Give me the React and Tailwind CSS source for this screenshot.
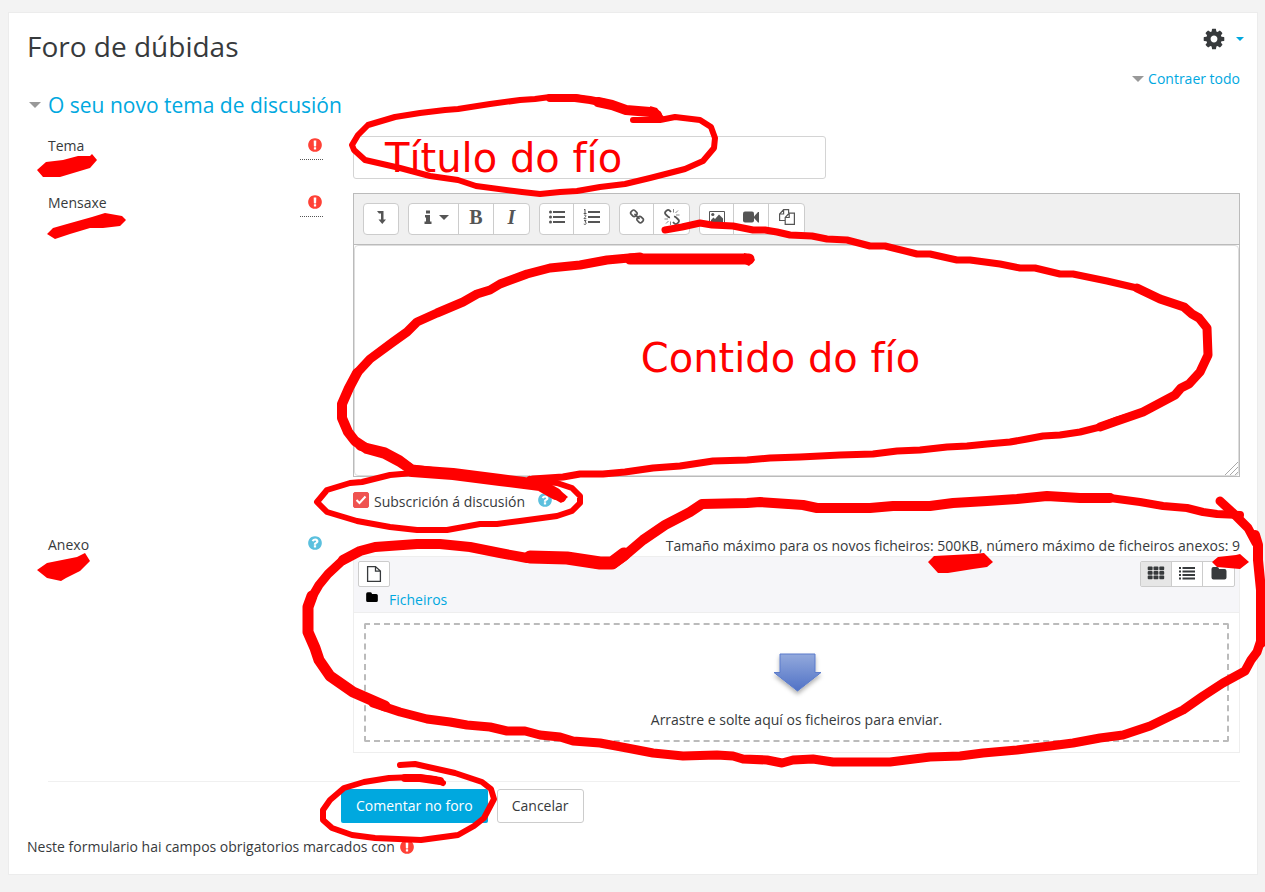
import React, { useState } from "react";

// ---------- icons (1792 grid) ----------
const PATHS = {
  cog: "M1152 896q0-106-75-181t-181-75-181 75-75 181 75 181 181 75 181-75 75-181zm512-109v222q0 12-8 23t-20 13l-185 28q-19 54-39 91 35 50 107 138 10 12 10 25t-9 23q-27 37-99 108t-94 71q-12 0-26-9l-138-108q-44 23-91 38-16 136-29 186-7 28-36 28h-222q-14 0-24.5-8.5t-11.5-21.5l-28-184q-49-16-90-37l-141 107q-10 9-25 9-14 0-25-11-126-114-165-168-7-10-7-23 0-12 8-23 15-21 51-66.5t54-70.5q-27-50-41-99l-183-27q-13-2-21-12.5t-8-23.5v-222q0-12 8-23t19-13l186-28q14-46 39-92-40-57-107-138-10-12-10-24 0-10 9-23 26-36 98.5-107.5t94.5-71.5q13 0 26 10l138 107q44-23 91-38 16-136 29-186 7-28 36-28h222q14 0 24.5 8.5t11.5 21.5l28 184q49 16 90 37l142-107q9-9 24-9 13 0 25 10 129 119 165 170 7 8 7 22 0 12-8 23-15 21-51 66.5t-54 70.5q26 50 41 98l183 28q13 2 21 12.5t8 23.5z",
  exclamation:
    "M896 128q209 0 385.5 103t279.5 279.5 103 385.5-103 385.5-279.5 279.5-385.5 103-385.5-103-279.5-279.5-103-385.5 103-385.5 279.5-279.5 385.5-103zm128 1247v-190q0-14-9-23.5t-22-9.5h-192q-13 0-23 10t-10 23v190q0 13 10 23t23 10h192q13 0 22-9.5t9-23.5zm-2-344l18-621q0-12-10-18-10-8-24-8h-220q-14 0-24 8-10 6-10 18l17 621q0 10 10 17.5t24 7.5h185q14 0 23.5-7.5t10.5-17.5z",
  question:
    "M1024 1376v-192q0-14-9-23t-23-9h-192q-14 0-23 9t-9 23v192q0 14 9 23t23 9h192q14 0 23-9t9-23zm256-672q0-88-55.5-163t-138.5-116-170-41q-243 0-371 213-15 24 8 42l132 100q7 6 19 6 16 0 25-12 53-68 86-92 34-24 86-24 48 0 85.5 26t37.5 59q0 38-20 61t-68 45q-63 28-115.5 86.5t-52.5 125.5v36q0 14 9 23t23 9h192q14 0 23-9t9-23q0-19 21.5-49.5t54.5-49.5q32-18 49-28.5t46-35 44.5-48 28-60.5 12.5-81zm384 192q0 209-103 385.5t-279.5 279.5-385.5 103-385.5-103-279.5-279.5-103-385.5 103-385.5 279.5-279.5 385.5-103 385.5 103 279.5 279.5 103 385.5z",
  link: "M1520 1216q0-40-28-68l-208-208q-28-28-68-28-42 0-72 32 3 3 19 18.5t21.5 21.5 15 19 13 25.5 3.5 27.5q0 40-28 68t-68 28q-15 0-27.5-3.5t-25.5-13-19-15-21.5-21.5-18.5-19q-33 31-33 73 0 40 28 68l206 207q27 27 68 27 40 0 68-26l147-146q28-28 28-67zm-703-705q0-40-28-68l-206-207q-28-28-68-28-39 0-68 27l-147 146q-28 28-28 67 0 40 28 68l208 208q27 27 68 27 42 0 72-31-3-3-19-18.5t-21.5-21.5-15-19-13-25.5-3.5-27.5q0-40 28-68t68-28q15 0 27.5 3.5t25.5 13 19 15 21.5 21.5 18.5 19q33-31 33-73zm895 705q0 120-85 203l-147 146q-83 83-203 83-121 0-204-85l-206-207q-83-83-83-203 0-123 88-209l-88-88q-86 88-208 88-120 0-204-84l-208-208q-84-84-84-204t85-203l147-146q83-83 203-83 121 0 204 85l206 207q83 83 83 203 0 123-88 209l88 88q86-88 208-88 120 0 204 84l208 208q84 84 84 204z",
};

function Glyph({ name, className }) {
  return (
    <svg viewBox="0 0 1792 1792" fill="currentColor" aria-hidden="true" className={className}>
      <path d={PATHS[name]} />
    </svg>
  );
}

function Caret({ className }) {
  return (
    <svg viewBox="0 0 12 6" fill="currentColor" aria-hidden="true" className={className}>
      <path d="M0 0h12L6 6z" />
    </svg>
  );
}

function Small({ children, className = "w-[18px] h-[18px]" }) {
  return (
    <svg viewBox="0 0 18 18" fill="currentColor" aria-hidden="true" className={className}>
      {children}
    </svg>
  );
}

const ExpandIcon = () => (
  <Small>
    <path d="M5 3h6.500v8.500H14L10.250 16 6.500 11.500H9V5.500H7z" />
  </Small>
);

const InfoIcon = () => (
  <Small>
    <path d="M7 2.500h4v3H7zM6 7h5v6.500h1.500V16h-7v-2.500H7v-4H6z" />
  </Small>
);

const BulletIcon = () => (
  <Small>
    <circle cx="2.500" cy="4" r="1.500" />
    <circle cx="2.500" cy="9" r="1.500" />
    <circle cx="2.500" cy="14" r="1.500" />
    <path d="M5 3h12v2H5zM5 8h12v2H5zM5 13h12v2H5z" />
  </Small>
);

const NumberIcon = () => (
  <Small>
    <path d="M5 3h12v2H5zM5 8h12v2H5zM5 13h12v2H5z" />
    <path
      d="M1 2l1-.8V5.500M.7 5.500H3.500M1 7.500c.5-.8 2.200-.6 2 .5C2.800 9 1 9.600 1 10.700h2.300M1 12.600h2.100l-1.100 1.500c1.600 0 1.600 2.300-.1 2.300L.8 16"
      fill="none"
      stroke="currentColor"
      strokeWidth="1"
    />
  </Small>
);

const UnlinkIcon = () => (
  <Small>
    <g fill="none" stroke="currentColor" strokeWidth="1.800">
      <path d="M8 4L6.700 2.600a2.200 2.200 0 0 0-3.100 0l-.8.8a2.200 2.200 0 0 0 0 3.100L5 8.700a2.200 2.200 0 0 0 2 .6" />
      <path d="M10 14l1.300 1.400a2.200 2.200 0 0 0 3.100 0l.8-.8a2.200 2.200 0 0 0 0-3.100L13 9.300a2.200 2.200 0 0 0-2-.6" />
    </g>
    <path
      d="M10.500 1v3.500M12.500 5l2.500-2.500M13 7h3.500M7.500 17v-3.500M5.500 13L3 15.500M5 11H1.500"
      fill="none"
      stroke="currentColor"
      strokeWidth="0.700"
    />
  </Small>
);

const ImageIcon = () => (
  <Small>
    <path d="M1.500 3.500h15v12h-15z" fill="none" stroke="currentColor" />
    <circle cx="4.800" cy="6.500" r="1.600" />
    <path d="M3 14v-2l2.500-2.500L7 11l4-4.500 4 4V14z" />
  </Small>
);

const VideoIcon = () => (
  <Small>
    <rect x="1" y="3.500" width="11" height="11" rx="2" />
    <path d="M12 8.500l4-4.500h1v10.500h-1l-4-4.500z" />
  </Small>
);

const FilesIcon = () => (
  <Small>
    <g fill="none" stroke="currentColor" strokeWidth="1.200">
      <path d="M7 12.500H1.600V6l4-4.400h5v3.500M5.600 1.600V6h-4" />
      <path d="M7.200 16.400V9.500l4-4.400h5.200v11.300zM11.200 5.100v4.400h-4" />
    </g>
  </Small>
);

const FileIcon = () => (
  <Small>
    <path
      d="M3 1.600h7.500L15.400 6v10.400H2.600V1.600zM10.500 1.600V6.200h4.900"
      fill="none"
      stroke="currentColor"
      strokeWidth="1.300"
    />
  </Small>
);

const GridIcon = () => (
  <Small>
    {[2.500, 7, 11.500].map((y) => (
      <g key={y}>
        <rect x="0.700" y={y} width="4.900" height="3.700" rx="0.900" />
        <rect x="6.500" y={y} width="4.900" height="3.700" rx="0.900" />
        <rect x="12.300" y={y} width="4.900" height="3.700" rx="0.900" />
      </g>
    ))}
  </Small>
);

const ListIcon = () => (
  <Small>
    <path d="M1 3h2v2H1zM1 6.500h2v2H1zM1 10h2v2H1zM1 13.500h2v2H1zM4.500 3H17v2H4.500zM4.500 6.500H17v2H4.500zM4.500 10H17v2H4.500zM4.500 13.500H17v2H4.500z" />
  </Small>
);

const FolderIcon = ({ className }) => (
  <Small className={className}>
    <path d="M1.500 5a2 2 0 0 1 2-2h3.500a2 2 0 0 1 2 2h5.500a2 2 0 0 1 2 2v6.500a2 2 0 0 1-2 2h-11a2 2 0 0 1-2-2z" />
  </Small>
);

// ---------- form pieces ----------
function Required() {
  return (
    <abbr
      title="Obrigatorio"
      className="flex h-6 w-[23px] justify-end border-b border-dotted border-[#555] pt-[1px]"
    >
      <Glyph name="exclamation" className="h-4 w-4 text-[#ff4136]" />
    </abbr>
  );
}

function Help({ label }) {
  return (
    <button type="button" aria-label={label} className="block">
      <Glyph name="question" className="h-4 w-4 text-[#5bc0de]" />
    </button>
  );
}

function Row({ htmlFor, label, icon, children, className }) {
  return (
    <div className={`grid grid-cols-[305px_1fr] pl-[21px] ${className}`}>
      <div className="flex items-start justify-between pr-[30px]">
        <label htmlFor={htmlFor} className="leading-5">
          {label}
        </label>
        {icon}
      </div>
      <div className="min-w-0">{children}</div>
    </div>
  );
}

const TOOLS = [
  [{ label: "Amosar máis botóns", width: "w-[34px]", icon: <ExpandIcon /> }],
  [
    {
      label: "Estilos de parágrafo",
      width: "w-[50px] gap-0.5",
      icon: (
        <>
          <InfoIcon />
          <Caret className="h-[5px] w-[10px]" />
        </>
      ),
    },
    {
      label: "Negra",
      width: "w-[35px]",
      icon: <b className="font-['Liberation_Serif',serif] text-xl leading-5">B</b>,
    },
    {
      label: "Cursiva",
      width: "w-[35px]",
      icon: <b className="font-['Liberation_Serif',serif] text-xl italic leading-5">I</b>,
    },
  ],
  [
    { label: "Lista sen ordenar", width: "w-[34px]", icon: <BulletIcon /> },
    { label: "Lista ordenada", width: "w-[35px]", icon: <NumberIcon /> },
  ],
  [
    { label: "Ligazón", width: "w-[34px]", icon: <Glyph name="link" className="h-4 w-4" /> },
    { label: "Retirar ligazón", width: "w-[35px]", icon: <UnlinkIcon /> },
  ],
  [
    { label: "Imaxe", width: "w-[34px]", icon: <ImageIcon /> },
    { label: "Multimedia", width: "w-[35px]", icon: <VideoIcon /> },
    { label: "Xestionar ficheiros", width: "w-[35px]", icon: <FilesIcon /> },
  ],
];

function EditorToolbar() {
  return (
    <div className="flex flex-wrap gap-[9px] border-b border-[#bbb] bg-[#f0f0f0] p-[9px]">
      {TOOLS.map((group, i) => (
        <div
          key={i}
          className="flex h-8 divide-x divide-[#ccc] rounded border border-[#ccc] bg-white text-[#555]"
        >
          {group.map((tool) => (
            <button
              key={tool.label}
              type="button"
              aria-label={tool.label}
              className={`flex items-center justify-center pb-1 ${tool.width}`}
            >
              {tool.icon}
            </button>
          ))}
        </div>
      ))}
    </div>
  );
}

function FileManager() {
  return (
    <div className="border border-[#eee] bg-white">
      <div className="border-b border-[#eee] bg-[#f6f6f9] px-1 pt-1">
        <div className="flex items-start justify-between">
          <button
            type="button"
            aria-label="Engadir"
            className="flex h-[26px] w-8 items-center justify-center rounded-xs border border-[#ccc] bg-white"
          >
            <FileIcon />
          </button>
          <div className="flex h-[26px] divide-x divide-[#ccc] rounded-xs border border-[#ccc] bg-white">
            <button type="button" aria-label="Iconas" className="flex w-[31px] justify-center bg-[#e6e6e6] pt-0.5">
              <GridIcon />
            </button>
            <button type="button" aria-label="Lista" className="flex w-[31px] justify-center pt-0.5">
              <ListIcon />
            </button>
            <button type="button" aria-label="Árbore" className="flex w-[31px] justify-center pt-0.5">
              <FolderIcon className="h-[18px] w-[18px]" />
            </button>
          </div>
        </div>
        <div className="flex h-[25px] items-start gap-[10px] pl-[7px] pt-[3px]">
          <FolderIcon className="h-[14px] w-[14px] text-black" />
          <a href="#ficheiros" className="leading-5 text-[#00a8df]">
            Ficheiros
          </a>
        </div>
      </div>

      <div className="p-[10px]">
        <div className="flex h-[119px] flex-col items-center rounded-xs border-2 border-dashed border-[#bbb] pt-[25px]">
          <svg viewBox="0 0 60 50" className="h-[50px] w-[60px]" aria-hidden="true">
            <defs>
              <linearGradient id="arrow" x1="0" y1="0" x2="0" y2="1">
                <stop offset="0" stopColor="#93a9dc" />
                <stop offset="1" stopColor="#5072c6" />
              </linearGradient>
              <filter id="arrow-shadow" x="-20%" y="-20%" width="140%" height="150%">
                <feDropShadow dx="0" dy="3" stdDeviation="2" floodColor="#000" floodOpacity="0.300" />
              </filter>
            </defs>
            <path
              d="M13 4h35v18.500h6L30.500 41 7 22.500h6z"
              fill="url(#arrow)"
              stroke="#5b7bcb"
              filter="url(#arrow-shadow)"
            />
          </svg>
          <p className="pt-[10px] leading-5">Arrastre e solte aquí os ficheiros para enviar.</p>
        </div>
      </div>
    </div>
  );
}

// ---------- red marker layer ----------
const STROKES = [
  // title
  [6, "M633 120L660 120 675 117 700 120 711 127 715 138 714 148 703 161 685 169 650 178 625 184 600 187 577 191 560 192 540 194 522 192 476 186 458 180 430 176 400 168 365 160 354 150 352 145 358 135 368 125 395 117 420 113 445 110 458 109 490 104 520 100 535 99 550 97 575 97 590 100"],
  [8, "M550 98L575 98 590 100 605 103"],
  [10, "M598 102L612 105 626 110 650 112 657 115"],
  // content
  [7, "M665 230L682 227 700 223 712 225 733 226 753 230 765 230 777 232 790 235 812 236 827 239 847 240 870 246 885 246 917 254 930 254 957 260 970 260 1000 264 1020 268 1035 268 1060 274 1073 274 1107 281 1137 288 1160 299 1185 307"],
  [9, "M1137 288L1160 299 1184 307 1192 314 1199 318 1207 328 1208 355 1200 372 1189 384 1181 388 1175 395 1143 412 1117 421 1100 427"],
  [7, "M1143 412L1117 420 1100 427 1080 432 1060 435 1043 436 1027 439 1010 442 987 444 967 446 947 447 920 450 897 451 873 454 840 455 800 457 770 458 747 460 713 461 680 466 653 468 625 472 603 474 580 474 563 477 533 479"],
  [11, "M749 259L700 259 630 259"],
  [9, "M640 257L607 260 580 265 550 268 527 274 500 284 490 290 477 294 463 302 437 313 417 322 407 332 393 342 370 359 357 373"],
  [10, "M357 373L349 388 342 404 342 418 348 432 355 441 367 449 385 454 400 462 412 470"],
  [9, "M360 446L385 452 400 460 412 469 453 474"],
  [12, "M412 471L453 474 500 480 540 485 556 494"],
  [8, "M530 480L545 486 562 498"],
  // subscription
  [6, "M540 481L557 483 572 488 580 496 580 503 572 511 557 516 520 521 497 524 480 524 447 530 417 530 390 527 357 521 327 512 317 502 327 490 350 483 362 482 390 475 413 473"],
  // attachments
  [9, "M1220 501L1232 512 1248 528 1256 543"],
  [10, "M1255 535L1258 545 1258 560 1261 590 1261 643"],
  [9, "M1261 640L1257 652 1251 660 1245 671 1223 683 1203 696 1183 710 1150 726 1123 735 1100 738 1073 743 1050 746 1033 748 1017 750 983 753 960 756 930 757 890 762 833 762 813 759 793 760 782 763 767 760 743 759 733 756 717 755 683 756 653 753 627 748 600 743 573 741 560 737 540 735 525 731 507 731 490 727 467 725 450 722 427 719 400 712 373 703"],
  [11, "M385 706L353 692 330 676 319 660 315 648 308 632 308 607 312 596"],
  [9, "M309 605L312 597 319 585 328 574 343 560"],
  [10, "M343 560L360 551 375 547 417 544 440 544 470 547 500 553 527 558 567 558 583 561 600 564 613 564 623 557 643 540 665 525 690 512 702 504 747 503 760 502 803 505 817 508 870 508 893 506 930 506 953 503 987 501 1017 499 1047 496 1080 498 1110 498"],
  [13, "M530 557L567 558 600 563 612 563 624 554"],
  [8, "M1110 498L1140 502 1163 506 1187 508 1203 512 1217 514 1240 515"],
  // submit
  [6, "M400 765L415 764 455 773 482 782 491 789 494 799 484 818 474 826 458 835 421 840 375 838 352 835 332 828 323 820 323 810 330 800 344 788 364 782 389 778 415 777 435 779 443 783"],
  [8, "M405 778L420 778 440 781"],
];

const SMUDGES = [
  "M37 170L46 162 63 160 78 156 90 156 92 154 97 160 90 168 80 171 60 177 43 177z",
  "M47 234L53 228 67 224 92 217 105 213 122 216 126 220 120 226 103 228 90 228 70 234 55 239z",
  "M37 570L47 563 62 560 77 557 85 553 90 561 80 571 66 578 61 581 47 578z",
  "M928 562L934 556 973 554 984 553 993 562 987 567 973 569 948 573 938 573z",
  "M1212 562L1218 557 1236 555 1240 554 1249 562 1240 569 1217 567z",
  "M744 253L751 255 755 260 749 266 743 263z",
  "M650 106L657 108 664 117 655 121z",
  "M551 491L561 491 568 497 561 503 554 499z",
];

function Marker() {
  return (
    <svg
      viewBox="0 0 1265 892"
      preserveAspectRatio="none"
      aria-hidden="true"
      className="pointer-events-none absolute inset-0 h-full w-full"
    >
      <g fill="none" stroke="#ff0000" strokeLinecap="round" strokeLinejoin="round">
        {STROKES.map(([width, d]) => (
          <path key={d} d={d} strokeWidth={width} />
        ))}
      </g>
      <g fill="#ff0000">
        {SMUDGES.map((d) => (
          <path key={d} d={d} />
        ))}
      </g>
    </svg>
  );
}

function App() {
  const [subject, setSubject] = useState("");
  const [message, setMessage] = useState("");
  const [subscribed, setSubscribed] = useState(true);

  return (
    <div className="relative min-h-screen overflow-hidden bg-[#f3f3f3] pl-2 pr-[7px] pt-3 font-['Open_Sans','Noto_Sans',sans-serif] text-sm text-[#373a3c]">
      <main className="border border-[#ececec] bg-white pb-[17px] pl-[18px] pr-[17px]">
        {/* header */}
        <header className="flex items-start justify-between pt-[14px]">
          <h1 className="text-[28px] leading-[38px]">Foro de dúbidas</h1>
          <button type="button" aria-label="Accións" className="-mr-1 flex items-center gap-[10px]">
            <Glyph name="cog" className="h-6 w-6" />
            <Caret className="h-1 w-2 text-[#00a8df]" />
          </button>
        </header>

        <div className="flex items-center justify-end gap-1 leading-7">
          <Caret className="h-1.5 w-3 text-[#999]" />
          <a href="#contraer" className="text-[#00a8df]">
            Contraer todo
          </a>
        </div>

        <form onSubmit={(e) => e.preventDefault()}>
          <h2 className="flex items-center gap-[7px] pl-[2px] text-[21px] leading-6 text-[#00a8df]">
            <Caret className="h-1.5 w-3 text-[#999]" />
            O seu novo tema de discusión
          </h2>

          <Row htmlFor="tema" label="Tema" icon={<Required />} className="mt-[19px]">
            <div className="relative w-[473px] max-w-full">
              <input
                id="tema"
                type="text"
                value={subject}
                onChange={(e) => setSubject(e.target.value)}
                className="block h-[43px] w-full rounded-[3px] border border-[#d4d4d4] px-3 outline-none"
              />
              <span className="pointer-events-none absolute inset-0 pl-8 font-['DejaVu_Sans',sans-serif] text-[40px] leading-[44px] text-[#ff0000]">
                Título do fío
              </span>
            </div>
          </Row>

          <Row htmlFor="mensaxe" label="Mensaxe" icon={<Required />} className="mt-[14px]">
            <div className="border border-[#bbb]">
              <EditorToolbar />
              <div className="relative">
                <textarea
                  id="mensaxe"
                  value={message}
                  onChange={(e) => setMessage(e.target.value)}
                  className="block h-[231px] w-full resize-none rounded border border-[#ddd] p-2 outline-none"
                />
                <svg viewBox="0 0 15 15" className="absolute bottom-0 right-0 h-[15px] w-[15px]" aria-hidden="true">
                  <path d="M1 14L14 1M6 14L14 6M11 14L14 11" stroke="#aaa" fill="none" />
                </svg>
                <span className="pointer-events-none absolute inset-0 flex items-center justify-center pb-1.5 pr-8 font-['DejaVu_Sans',sans-serif] text-[40px] leading-[44px] text-[#ff0000]">
                  Contido do fío
                </span>
              </div>
            </div>
          </Row>

          <Row className="mt-[13px]">
            <div className="flex h-5 items-center">
              <span className="relative h-4 w-4">
                <input
                  id="subscricion"
                  type="checkbox"
                  checked={subscribed}
                  onChange={(e) => setSubscribed(e.target.checked)}
                  className="block h-4 w-4 appearance-none rounded-xs border border-[#ef5350] checked:bg-[#ef5350]"
                />
                {subscribed && (
                  <svg viewBox="0 0 16 16" className="pointer-events-none absolute inset-0 h-4 w-4" aria-hidden="true">
                    <path d="M3.500 8l3 3 6-6.500" fill="none" stroke="#fff" strokeWidth="2" />
                  </svg>
                )}
              </span>
              <label htmlFor="subscricion" className="pl-[5px] pr-3 pt-1 leading-5">
                Subscrición á discusión
              </label>
              <Help label="Axuda sobre a subscrición" />
            </div>
          </Row>

          <Row label="Anexo" icon={<Help label="Axuda sobre o anexo" />} className="mt-[25px]">
            <p className="text-right leading-[21px]">
              Tamaño máximo para os novos ficheiros: 500KB, número máximo de ficheiros anexos: 9
            </p>
            <FileManager />
          </Row>

          <div className="ml-[21px] mt-7 flex gap-[9px] border-t border-[#f0f0f0] pl-[293px] pt-[7px]">
            <button type="submit" className="h-[34px] rounded-xs bg-[#00a8df] px-[15px] text-white">
              Comentar no foro
            </button>
            <button type="button" className="h-[34px] rounded-[3px] border border-[#ccc] bg-white px-[14px]">
              Cancelar
            </button>
          </div>
        </form>

        <p className="mt-[14px] flex items-center gap-1 leading-5">
          Neste formulario hai campos obrigatorios marcados con
          <Glyph name="exclamation" className="h-4 w-4 text-[#ff4136]" />
        </p>
      </main>

      <Marker />
    </div>
  );
}

export default App;
